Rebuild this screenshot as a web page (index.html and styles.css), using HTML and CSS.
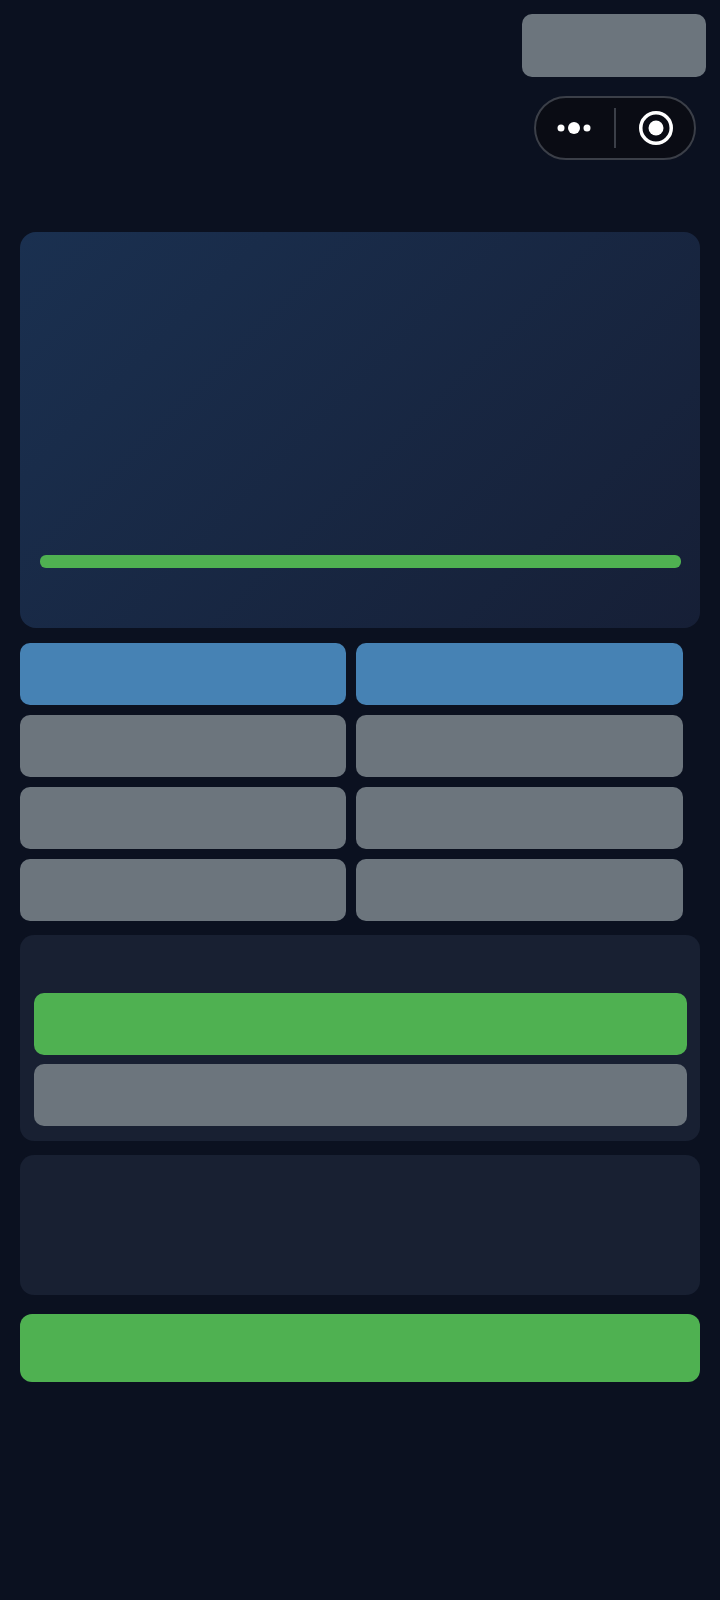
FILE: index.html
```html
<!DOCTYPE html>
<html lang="en">

<head>
    <meta charset="UTF-8">
    <meta name="viewport" content="width=device-width, initial-scale=1.0">
    <title>Dashboard</title>
    <link rel="stylesheet" href="styles.css">
</head>

<body>
    <div class="top-bar">
        <div class="top-btn btn-gray"></div>
        <!-- Mini program capsule -->
        <div class="capsule">
            <div class="capsule-side capsule-more">
                <svg width="34" height="14" viewBox="0 0 34 14">
                    <circle cx="4" cy="7" r="3.5" fill="#fff" />
                    <circle cx="17" cy="7" r="6" fill="#fff" />
                    <circle cx="30" cy="7" r="3.5" fill="#fff" />
                </svg>
            </div>
            <div class="capsule-divider"></div>
            <div class="capsule-side capsule-close">
                <svg width="34" height="34" viewBox="0 0 34 34">
                    <circle cx="17" cy="17" r="15.25" fill="none" stroke="#fff" stroke-width="3.5" />
                    <circle cx="17" cy="17" r="7.5" fill="#fff" />
                </svg>
            </div>
        </div>
    </div>

    <div class="hero-card">
        <div class="progress-bar"></div>
    </div>

    <div class="btn-grid">
        <div class="grid-btn btn-blue"></div>
        <div class="grid-btn btn-blue"></div>
        <div class="grid-btn btn-gray"></div>
        <div class="grid-btn btn-gray"></div>
        <div class="grid-btn btn-gray"></div>
        <div class="grid-btn btn-gray"></div>
        <div class="grid-btn btn-gray"></div>
        <div class="grid-btn btn-gray"></div>
    </div>

    <div class="panel action-panel">
        <div class="wide-btn btn-green"></div>
        <div class="wide-btn btn-gray"></div>
    </div>

    <div class="panel empty-panel"></div>

    <div class="submit-btn btn-green"></div>
</body>

</html>
```

FILE: styles.css
```css
* {
    margin: 0;
    padding: 0;
    box-sizing: border-box;
    font-family: 'Liberation Sans', Arial, sans-serif;
}

body {
    background-color: #0b1120;
    min-height: 100vh;
    padding: 14px 20px 0;
    color: white;
}

.btn-gray {
    background-color: #6c757d;
}

.btn-blue {
    background-color: #4682b4;
}

.btn-green {
    background-color: #4fb151;
}

.top-bar {
    display: flex;
    flex-direction: column;
    align-items: flex-end;
    height: 218px;
}

.top-btn {
    width: 184px;
    height: 63px;
    margin-right: -6px;
    border-radius: 10px;
}

.capsule {
    display: flex;
    align-items: center;
    width: 162px;
    height: 64px;
    margin-top: 19px;
    margin-right: 4px;
    background-color: #0a0c14;
    border: 2px solid #3b3f48;
    border-radius: 32px;
}

.capsule-side {
    flex: 0 0 78px;
    display: flex;
    justify-content: center;
    align-items: center;
}

.capsule-more {
    padding-right: 3px;
}

.capsule-close {
    padding-left: 1px;
}

.capsule-divider {
    width: 2px;
    height: 40px;
    background-color: #3b3f48;
}

.hero-card {
    display: flex;
    flex-direction: column;
    justify-content: flex-end;
    height: 396px;
    padding: 0 19px 60px 20px;
    background: linear-gradient(135deg, #1a3050, #161f36);
    border-radius: 16px;
}

.progress-bar {
    height: 13px;
    background-color: #4fb151;
    border-radius: 6px;
}

.btn-grid {
    display: grid;
    grid-template-columns: 326.4px 326.4px;
    grid-auto-rows: 62px;
    gap: 10px;
    margin-top: 15px;
}

.grid-btn {
    border-radius: 10px;
}

.panel {
    background-color: #182032;
    border-radius: 14px;
}

.action-panel {
    display: flex;
    flex-direction: column;
    gap: 9px;
    height: 206px;
    margin-top: 14px;
    padding: 58px 13px 0 14px;
}

.wide-btn {
    height: 62px;
    border-radius: 10px;
}

.empty-panel {
    height: 140px;
    margin-top: 14px;
}

.submit-btn {
    height: 68px;
    margin-top: 19px;
    border-radius: 12px;
}
```
